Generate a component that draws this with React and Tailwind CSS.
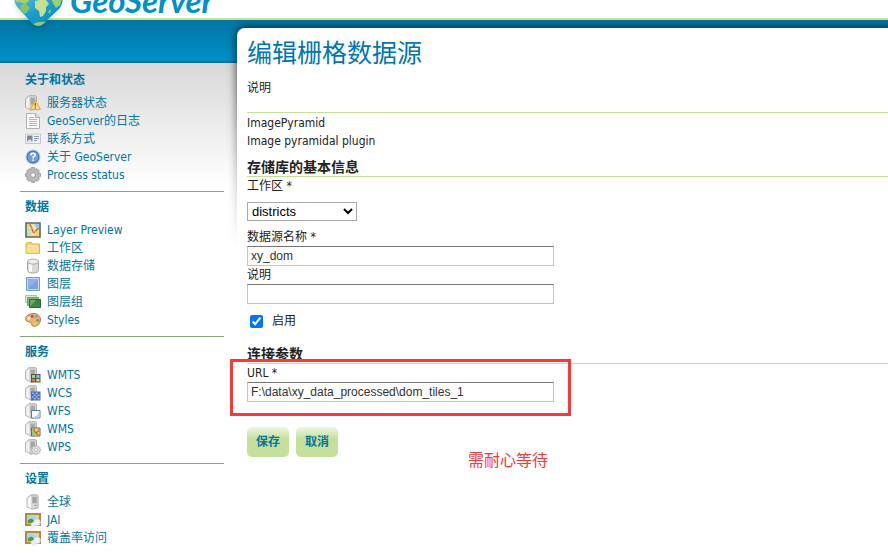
import React from "react";

function Icon({ children }) {
  return (
    <svg width="16" height="16" viewBox="0 0 16 16" className="shrink-0" aria-hidden="true">
      {children}
    </svg>
  );
}

function ServerShape() {
  return (
    <g>
      <path d="M.6 3.6 L4 .7 L10.5 .6 L11.5 1.6 V14 L6 15.2 L.6 12.3Z" fill="#d2d2d2" stroke="#ababab" strokeWidth=".9" strokeLinejoin="round" />
      <path d="M1.2 3.9 L4.4 1.4 V14 L1.2 12Z" fill="#f1f1f1" />
      <path d="M5.2 2.4 H10 V10 H5.2Z" fill="#bdbdbd" />
      <path d="M5.8 4 H9.6 M5.8 6 H9.6 M5.8 8 H9.6" stroke="#8a8a8a" strokeWidth=".9" />
    </g>
  );
}

function Gear({ cx, cy, r, fill = "#c9c9c9", stroke = "#8a8a8a" }) {
  return (
    <g transform={`translate(${cx} ${cy}) scale(${r / 8})`}>
      <path
        d="M-1.6 -7.6 H1.6 L2.1 -5.3 L4.2 -6.5 L6.5 -4.2 L5.3 -2.1 L7.6 -1.6 V1.6 L5.3 2.1 L6.5 4.2 L4.2 6.5 L2.1 5.3 L1.6 7.6 H-1.6 L-2.1 5.3 L-4.2 6.5 L-6.5 4.2 L-5.3 2.1 L-7.6 1.6 V-1.6 L-5.3 -2.1 L-6.5 -4.2 L-4.2 -6.5 L-2.1 -5.3Z"
        fill={fill}
        stroke={stroke}
        strokeWidth="1"
      />
      <circle r="2.4" fill="#fff" stroke={stroke} strokeWidth="1" />
    </g>
  );
}

function ServerWarning() {
  return (
    <Icon>
      <ServerShape />
      <path d="M10.3 5 L15.5 14.6 H5.2Z" fill="#fbdc7c" stroke="#dda43c" strokeLinejoin="round" />
      <path d="M10.3 8 V11.3 M10.3 12.2 V13.4" stroke="#8a5a1a" strokeWidth="1.2" />
    </Icon>
  );
}
function Page() {
  return (
    <Icon>
      <path d="M1.5 .5 H11 L14.5 4 V15.5 H1.5Z" fill="#f8f8f8" stroke="#b0b0b0" />
      <path d="M10.5 .5 V4.5 H14.5" fill="#ddd" stroke="#b0b0b0" />
      <path d="M4 4.5 H9 M4 6.5 H12 M4 8.5 H12 M4 10.5 H12 M4 12.5 H12" stroke="#b5b5b5" />
    </Icon>
  );
}
function Card() {
  return (
    <Icon>
      <path d="M.5 3 H15.5 V12.5 H.5Z" fill="#eef1f6" stroke="#c3c9d2" />
      <path d="M2 4.5 H7.5 V10.5 H2Z" fill="#5b93dc" />
      <circle cx="4.8" cy="6.4" r="1.4" fill="#b57545" />
      <path d="M2.6 10.5 Q4.8 6.6 7 10.5Z" fill="#f2f2f2" />
      <path d="M9 5.5 H14 M9 7.5 H14 M9 9.5 H12" stroke="#8d9bb0" />
    </Icon>
  );
}
function Help() {
  return (
    <Icon>
      <circle cx="8" cy="8" r="7" fill="#5f8ecb" stroke="#b9c9e2" />
      <circle cx="8" cy="8" r="5.8" fill="#6f9ddb" stroke="#3f69a8" strokeWidth=".8" />
      <path d="M5.8 6.4 Q6 4.3 8 4.3 Q10.3 4.4 10.2 6.2 Q10 7.3 8.2 8 V9.5 M8.1 10.6 V12.1" fill="none" stroke="#fff" strokeWidth="1.6" />
    </Icon>
  );
}
function Cog() {
  return (
    <Icon>
      <Gear cx={8} cy={8} r={7.8} fill="#b9b9b9" stroke="#9a9a9a" />
    </Icon>
  );
}
function MapIcon() {
  return (
    <Icon>
      <path d="M1 1 H15 V15 H1Z" fill="#f6e98f" stroke="#59695e" strokeWidth="1.6" />
      <path d="M2 2 H6 L9 8 L6 14 H2Z" fill="#c3dfa6" />
      <path d="M9 2 H14 V8 L11 7Z" fill="#9cc4ea" />
      <path d="M8 14 L10 10 L14 9 V14Z" fill="#f5d070" />
      <path d="M5 2 L8.5 11 M9 11 L13.5 6" fill="none" stroke="#dd5236" strokeWidth="1.5" />
      <path d="M2 6 H14 M2 10 H14 M6 2 V14 M10 2 V14" stroke="#fff" strokeOpacity=".5" strokeWidth=".6" />
    </Icon>
  );
}
function Folder() {
  return (
    <Icon>
      <path d="M1 3.5 L2 2.5 H6.5 L7.5 4 H14.5 V13.3 H1Z" fill="#f5cf69" stroke="#e2b04e" />
      <path d="M3 6 H12.5" stroke="#fff" />
      <path d="M1.5 7.5 H7 L8 6.5 H14 V12.8 H1.5Z" fill="#fbe08a" />
    </Icon>
  );
}
function Database() {
  return (
    <Icon>
      <path d="M2.5 3.5 V12.5 Q3 15 8 15 T13.5 12.5 V3.5" fill="#d9d9d9" stroke="#a9a9a9" />
      <path d="M4 5 V13 Q5 14 7 14 V5Z" fill="#fafafa" />
      <ellipse cx="8" cy="3.6" rx="5.5" ry="2.5" fill="#eee" stroke="#a9a9a9" />
    </Icon>
  );
}
function Layer() {
  return (
    <Icon>
      <path d="M1.5 1.5 H14.5 V14.5 H1.5Z" fill="#8fb1e8" stroke="#7599d0" />
      <path d="M2.5 2.5 H13.5 V13.5 H2.5Z" fill="none" stroke="#c8daf6" />
      <path d="M3 13 L13 3 V13Z" fill="#7ba1df" />
    </Icon>
  );
}
function LayerGroup() {
  return (
    <Icon>
      <path d="M.5 1.5 H11.5 V8.5 H.5Z" fill="#dcebd9" stroke="#a9c6a7" />
      <path d="M2.5 3.5 H13.5 V11.5 H2.5Z" fill="#8cb98a" stroke="#6aa069" />
      <path d="M4.5 5.5 H15.5 V13.5 H4.5Z" fill="#3f8340" stroke="#2d6a32" />
      <path d="M5 13 V6 H11Z" fill="#6fa86a" />
    </Icon>
  );
}
function Palette() {
  return (
    <Icon>
      <path d="M8 1.5 C13 1.2 16 4.5 15.4 8.5 C15 12.5 11.5 14.5 8.5 14.2 C6 14 7 11.3 5.3 10.3 C3.5 9.5 .8 10 .7 7.2 C.7 4 4 1.6 8 1.5Z" fill="#e7b27c" stroke="#b87942" />
      <circle cx="3.8" cy="6.3" r="1.5" fill="#fff3df" />
      <circle cx="7.2" cy="4.2" r="1.5" fill="#d5473a" />
      <circle cx="11.2" cy="4.6" r="1.5" fill="#5aa9d8" />
      <circle cx="12.8" cy="8.2" r="1.5" fill="#5fae4d" />
      <circle cx="10.2" cy="11.4" r="1.5" fill="#f0d43c" />
    </Icon>
  );
}
function Wmts() {
  return (
    <Icon>
      <ServerShape />
      <path d="M6 7 H15.5 V15.5 H6Z" fill="#4d5b52" />
      <path d="M7 8 H10 V11 H7Z" fill="#a8d27b" />
      <path d="M11.3 8 H14.5 V11 H11.3Z" fill="#8cb8ec" />
      <path d="M7 12 H10 V14.5 H7Z" fill="#e37a42" />
      <path d="M11.3 12 H14.5 V14.5 H11.3Z" fill="#f1d44f" />
    </Icon>
  );
}
function Wcs() {
  return (
    <Icon>
      <ServerShape />
      <path d="M6 6.5 H15.5 V15.5 H6Z" fill="#4870bd" />
      <path d="M7.2 8.3 H9 M10.8 8.3 H12.6 M9 10.2 H10.8 M12.6 10.2 H14.5 M7.2 12 H9 M10.8 12 H12.6 M9 13.8 H10.8 M12.6 13.8 H14.5" stroke="#a2bef0" strokeWidth="1.5" />
    </Icon>
  );
}
function Wfs() {
  return (
    <Icon>
      <ServerShape />
      <path d="M6.5 7.5 H15 V15 H6.5Z" fill="#fff" stroke="#5477b5" />
      <path d="M7 14.5 Q13 13.5 14.5 8 V14.5Z" fill="#b5cdf2" />
    </Icon>
  );
}
function Wms() {
  return (
    <Icon>
      <ServerShape />
      <path d="M6.5 7 H15 V15 H6.5Z" fill="#f0db70" stroke="#5a7160" />
      <path d="M7 7.5 H9 L11 14.5 H7Z" fill="#9bc878" />
      <path d="M11 7.5 H14.5 V10Z" fill="#78abdf" />
      <path d="M8.5 8 L11 12 L13.5 14 M11 12 L14 9.5" fill="none" stroke="#dc5a32" strokeWidth="1.3" />
    </Icon>
  );
}
function Wps() {
  return (
    <Icon>
      <ServerShape />
      <Gear cx={11} cy={11} r={4.8} fill="#dedede" stroke="#a3a3a3" />
    </Icon>
  );
}
function Server() {
  return (
    <Icon>
      <path d="M2 4.2 L6 1 L12 .8 L13 1.8 V14 L7.5 15.2 L2 13Z" fill="#dadada" stroke="#adadad" strokeLinejoin="round" />
      <path d="M2.6 4.6 L6 2 V14.3 L2.6 12.7Z" fill="#f6f6f6" />
      <path d="M7 2.6 H12 V9.5 H7Z" fill="#bdbdbd" />
      <path d="M7.6 4 H11.4 M7.6 6 H11.4 M7.6 8 H11.4" stroke="#8a8a8a" />
      <path d="M9.6 11.5 H11.4" stroke="#69b84f" strokeWidth="1.4" />
    </Icon>
  );
}
function Raster() {
  return (
    <Icon>
      <path d="M1 2 H15 V13 H1Z" fill="#a4d5f3" stroke="#b9843c" strokeWidth="2" />
      <path d="M2.4 3.4 H13.6 V11.6 H2.4Z" fill="none" stroke="#e6c994" strokeWidth=".8" />
      <path d="M2.8 11.3 V8 L6 6.5 L9 8 L8 11.3Z" fill="#4f9c45" />
      <path d="M9 3.8 H13.2 V6.5 L10.5 6Z" fill="#d8e27a" />
      <Gear cx={8.6} cy={12.8} r={2.8} fill="#f5f5f5" stroke="#d6d6d6" />
      <Gear cx={12.2} cy={10.4} r={3.6} fill="#f5f5f5" stroke="#d6d6d6" />
    </Icon>
  );
}

const sections = [
  {
    title: "关于和状态",
    items: [
      ["服务器状态", ServerWarning],
      ["GeoServer的日志", Page],
      ["联系方式", Card],
      ["关于 GeoServer", Help],
      ["Process status", Cog],
    ],
  },
  {
    title: "数据",
    items: [
      ["Layer Preview", MapIcon],
      ["工作区", Folder],
      ["数据存储", Database],
      ["图层", Layer],
      ["图层组", LayerGroup],
      ["Styles", Palette],
    ],
  },
  {
    title: "服务",
    items: [
      ["WMTS", Wmts],
      ["WCS", Wcs],
      ["WFS", Wfs],
      ["WMS", Wms],
      ["WPS", Wps],
    ],
  },
  {
    title: "设置",
    items: [
      ["全球", Server],
      ["JAI", Raster],
      ["覆盖率访问", Raster],
    ],
  },
];

function Sidebar() {
  return (
    <nav className="w-[237px] shrink-0 pt-[45px] pr-[13px] pl-5 text-[#0076a1]">
      {sections.map(({ title, items }) => (
        <section key={title} className="border-b border-[#8da57e] pt-[6px] pb-[7px]">
          <h3 className="mb-[5px] pl-[5px] font-bold">{title}</h3>
          <ul>
            {items.map(([label, Glyph]) => (
              <li key={label}>
                <a href="#" className="flex h-[18px] items-center gap-[6px] pl-[5px]">
                  <Glyph />
                  {label}
                </a>
              </li>
            ))}
          </ul>
        </section>
      ))}
    </nav>
  );
}

function Logo() {
  return (
    <svg width="56" height="30" viewBox="10 -2 56 30" className="absolute -top-[2px] left-[10px] z-10 drop-shadow-md" aria-hidden="true">
      <defs>
        <linearGradient id="globe" x1="0" x2="1" y1="0" y2="1">
          <stop offset="0" stopColor="#5bbbe0" />
          <stop offset=".5" stopColor="#1a9bcd" />
          <stop offset="1" stopColor="#0086b8" />
        </linearGradient>
      </defs>
      <path d="M14 -2 L15 3 Q16 6 19 9 L31 22 Q34 26 38 26 Q42 26 45 22 L59 9 Q62 6 63 -2Z" fill="url(#globe)" />
      <path d="M15 -2 H28 L29 1 L26 3 L25 4 L20 2 L16 2Z" fill="#a6d06a" />
      <path d="M21 5 L25 3 L30 8 L27 12 L24 14 L20 9Z" fill="#8cc35c" />
      <path d="M35 1 L39 0 L46 0 L49 4 L46 7 L46 11 L43 16 L40 17 L39 11 L35 8Z" fill="#c7e08c" />
      <path d="M51 -2 H62 L60 5 L56 8 L53 3Z" fill="#9fce6c" />
      <path d="M48 12 L51 9 L50 14Z" fill="#9fce6c" />
      <path d="M33 24 Q39 21 46 22 L43 24 Q39 28 33 24Z" fill="#8bcf6c" />
    </svg>
  );
}

function TextField({ id, label, value, className = "" }) {
  return (
    <div className={className}>
      <label htmlFor={id} className="block">{label}</label>
      <input
        id={id}
        type="text"
        defaultValue={value}
        className="block h-5 w-[307px] border border-[#c3c3c3] border-t-[#767676] bg-white px-[3px] font-['Liberation_Sans','Noto_Sans_CJK_SC',sans-serif] text-[12px] text-[#333]"
      />
    </div>
  );
}

function Button({ children }) {
  return (
    <button
      type="button"
      className="h-[30px] rounded-[5px] bg-linear-to-b from-[#eef6e2] via-[#c5e09b] via-40% to-[#c5e09b] px-[9px] font-bold text-[#0076a1]"
    >
      {children}
    </button>
  );
}

export default function App() {
  return (
    <div className="relative h-screen overflow-hidden bg-white font-['DejaVu_Sans_Condensed','Noto_Sans_CJK_SC',sans-serif] text-[12px] leading-[18px] text-[#222]">
      <header className="flex h-5 items-end overflow-hidden border-b-2 border-[#c5e09b] pb-px pl-[70px]">
        <Logo />
        <span className="font-['Lato',sans-serif] text-[33px] leading-[33px] font-bold text-[#0090ca] italic">GeoServer</span>
      </header>

      <div className="flex bg-[linear-gradient(#0076a1_0,#0090ca_41px,#0076a1_41px,#0076a1_43px,#d8d8d8_43px,#fff_165px)]">
        <Sidebar />

        <main className="relative mt-2 min-w-0 flex-1">
          <div className="absolute -top-2 right-0 -left-3 h-[228px] overflow-hidden mask-b-from-20% pt-2 pl-3">
            <div className="-mr-4 h-[260px] rounded-tl-[8px] shadow-[0_0_8px_1px_rgba(0,0,0,0.65)]" />
          </div>
          <div className="relative min-h-screen rounded-tl-[8px] bg-white pt-2 pl-[10px]">
            <h1 className="text-[25px] leading-[36px] text-[#0076b4]">编辑栅格数据源</h1>
            <p className="mt-[7px] border-b border-[#c5e09b] pb-[15px]">说明</p>
            <p className="mt-px">ImagePyramid</p>
            <p>Image pyramidal plugin</p>

            <section>
              <h2 className="mt-2 border-b border-[#c5e09b] text-[14px] leading-[18px] font-bold">存储库的基本信息</h2>
              <label htmlFor="workspace" className="block">工作区 *</label>
              <select
                id="workspace"
                defaultValue="districts"
                className="mt-[7px] block h-[19px] w-[110px] border border-[#a9a9a9] bg-white font-['Liberation_Sans',sans-serif] text-[13px] text-black"
              >
                <option>districts</option>
              </select>
              <TextField id="name" label="数据源名称 *" value="xy_dom" className="mt-[7px]" />
              <TextField id="description" label="说明" value="" />
              <div className="mt-2 flex items-center pl-[3px]">
                <input id="enabled" type="checkbox" defaultChecked className="h-[13px] w-[13px]" />
                <label htmlFor="enabled" className="ml-[9px]">启用</label>
              </div>
            </section>

            <section>
              <h2 className="mt-[15px] border-b border-[#c5e09b] text-[14px] leading-[18px] font-bold">连接参数</h2>
              <TextField id="url" label="URL *" value="F:\data\xy_data_processed\dom_tiles_1" />
            </section>

            <div className="mt-[25px] flex gap-[7px]">
              <Button>保存</Button>
              <Button>取消</Button>
            </div>
          </div>
        </main>
      </div>

      <div className="pointer-events-none absolute top-[359px] left-[230px] h-[57px] w-[341px] border-3 border-[#fa3838]" />
      <p className="absolute top-[449px] left-[468px] text-[16px] leading-6 text-[#fa3838]">需耐心等待</p>
    </div>
  );
}
